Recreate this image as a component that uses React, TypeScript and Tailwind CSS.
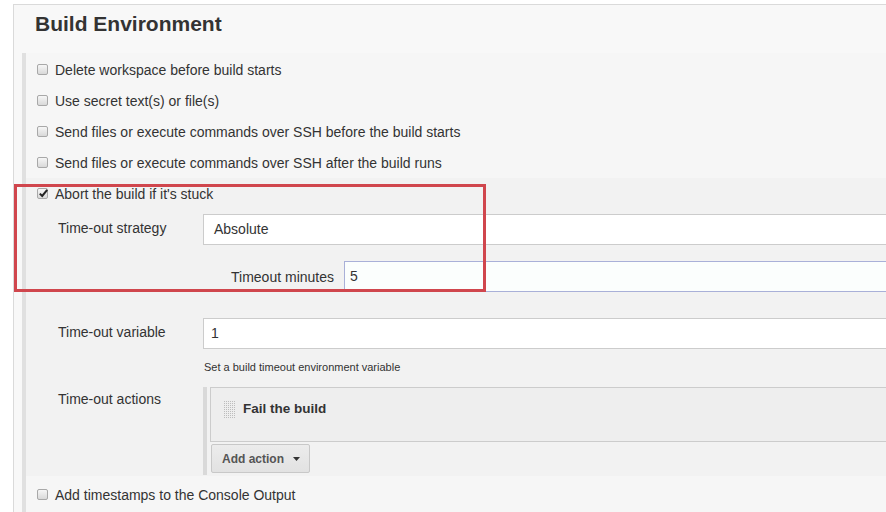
import React from "react";

function Checkbox({ checked = false }: { checked?: boolean }) {
  return (
    <div className="relative w-[11px] h-[11px] shrink-0 rounded-[2px] border border-[#a8a8a8] bg-gradient-to-b from-[#f6f6f6] to-[#d9d9d9]">
      {checked && (
        <svg className="absolute left-[0px] top-[-1px]" width="11" height="11" viewBox="0 0 11 11">
          <path d="M1.8 5.6 L4.2 8 L9.2 1.8" fill="none" stroke="#222" strokeWidth="2" />
        </svg>
      )}
    </div>
  );
}

function CheckRow({ label, checked = false, className = "" }: { label: string; checked?: boolean; className?: string }) {
  return (
    <div className={"flex items-center h-[31px] gap-[7px] " + className}>
      <Checkbox checked={checked} />
      <span className="text-[14px] leading-[20px]">{label}</span>
    </div>
  );
}

function DragHandle() {
  return (
    <svg width="12" height="17" viewBox="0 0 12 17" className="shrink-0">
      <defs>
        <pattern id="dots" width="2" height="2" patternUnits="userSpaceOnUse">
          <rect x="0" y="0" width="1" height="1" fill="#bdbdbd" />
        </pattern>
      </defs>
      <rect x="0" y="0" width="12" height="17" fill="url(#dots)" />
    </svg>
  );
}

export default function App() {
  return (
    <div className="relative w-[886px] h-[512px] overflow-hidden bg-white text-[#333] font-['Liberation_Sans',Arial,sans-serif]">
      <div className="flex h-full">
        <div className="w-[13px] shrink-0" />
        <div className="w-[900px] shrink-0 mt-[4px] border-l border-t border-[#dadada] bg-[#f8f8f8]">
          <h2 className="pl-[21px] pt-[7px] text-[21px] leading-[24px] font-bold text-[#333]">Build Environment</h2>
          <div className="mt-[17px] ml-[8px] flex h-[500px]">
            <div className="w-[4px] shrink-0 bg-[#e0e0e0]" />
            <div className="flex-1 bg-[#f6f6f6]">
              <div className="pl-[11px] pt-[1px]">
                <CheckRow label="Delete workspace before build starts" />
                <CheckRow label="Use secret text(s) or file(s)" />
                <CheckRow label="Send files or execute commands over SSH before the build starts" />
                <CheckRow label="Send files or execute commands over SSH after the build runs" />
              </div>
              <div className="bg-[#f2f2f2] pl-[11px]">
                <CheckRow label="Abort the build if it's stuck" checked />
                <div className="pl-[21px] pb-[1px]">
                  <div className="flex mt-[5px]">
                    <div className="w-[145px] shrink-0 pt-[4px] text-[14px] leading-[20px]">Time-out strategy</div>
                    <div className="flex-1 h-[31px] border border-[#cccccc] bg-white flex items-center pl-[10px] text-[14px]">
                      Absolute
                    </div>
                  </div>
                  <div className="flex items-center mt-[16px]">
                    <div className="w-[276px] shrink-0 text-right text-[14px] leading-[20px]">Timeout minutes</div>
                    <div className="ml-[10px] flex-1 h-[31px] border border-[#a9b0d8] bg-[#fbfefd] flex items-center pl-[5px] text-[14px]">
                      5
                    </div>
                  </div>
                  <div className="flex mt-[26px]">
                    <div className="w-[145px] shrink-0 pt-[4px] text-[14px] leading-[20px]">Time-out variable</div>
                    <div className="flex-1 h-[31px] border border-[#cccccc] bg-white flex items-center pl-[7px] text-[14px]">
                      1
                    </div>
                  </div>
                  <div className="ml-[146px] mt-[11px] text-[11px] leading-[14px]">Set a build timeout environment variable</div>
                  <div className="flex mt-[13px]">
                    <div className="w-[145px] shrink-0 pt-[2px] text-[14px] leading-[20px]">Time-out actions</div>
                    <div className="flex-1 flex">
                      <div className="w-[4px] shrink-0 bg-[#d9d9d9]" />
                      <div className="flex-1 ml-[3px] pb-[2px]">
                        <div className="h-[55px] border border-[#cccccc] bg-[#eeeeee] flex items-center pl-[13px] gap-[7px] pb-[10px]">
                          <DragHandle />
                          <span className="text-[13.5px] font-bold text-[#333]">Fail the build</span>
                        </div>
                        <div className="mt-[2px] ml-[1px] w-[99px] h-[29px] rounded-[2px] border border-[#c8c8c8] bg-gradient-to-b from-[#ececec] to-[#e2e2e2] flex items-center pl-[10px] gap-[9px]">
                          <span className="text-[12px] font-bold text-[#555]">Add action</span>
                          <svg width="7" height="4" viewBox="0 0 7 4">
                            <path d="M0 0 L7 0 L3.5 4 Z" fill="#333" />
                          </svg>
                        </div>
                      </div>
                    </div>
                  </div>
                </div>
              </div>
              <div className="pl-[11px] mt-[3px]">
                <CheckRow label="Add timestamps to the Console Output" />
              </div>
            </div>
          </div>
        </div>
      </div>
      <div className="absolute left-[14px] top-[184px] w-[472px] h-[108px] border-[3px] border-[#d0464d]" />
    </div>
  );
}
